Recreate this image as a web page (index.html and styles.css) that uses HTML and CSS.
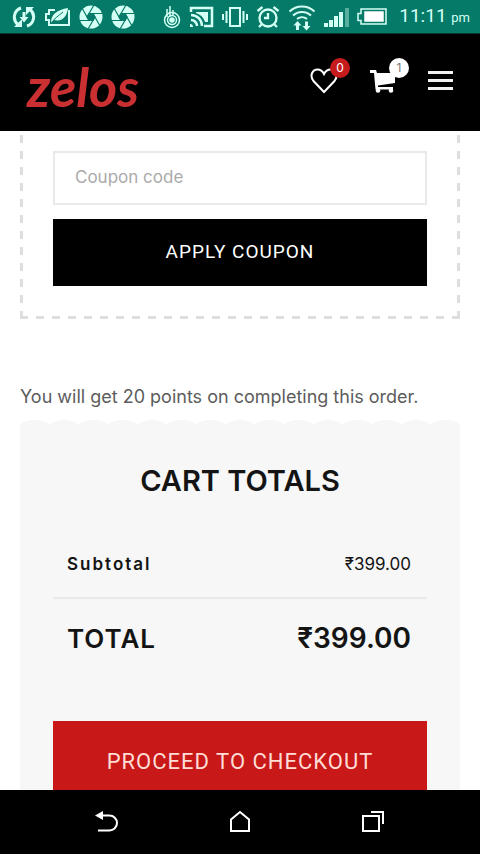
FILE: index.html
```html
<!DOCTYPE html>
<html lang="en">
<head>
<meta charset="utf-8">
<meta name="viewport" content="width=device-width, initial-scale=1">
<title>Cart – zelos</title>
<link rel="stylesheet" href="styles.css">
</head>
<body>
<div class="status-bar">
  <div class="status-icons status-left">
    <svg width="24" height="24" viewBox="0 0 24 24" fill="none" stroke="currentColor" stroke-width="3"><path d="M9 3A9.500 9.500 0 0 0 6 19.500M15 21A9.500 9.500 0 0 0 18 4.500M12 7v6"/><path d="M2 22h8v-8zM22 2h-8v8zM7.500 12h9L12 17.500z" fill="currentColor" stroke="none"/></svg>
    <svg width="27" height="24" viewBox="0 0 27 24" fill="none" stroke="currentColor" stroke-width="2"><path d="M11 5H5v4H2v6h3v5h20V5"/><path d="M7 18C7 9 13 5 24 3c-1 8-5 14-14 12z" fill="currentColor" stroke="none"/><path d="M6 19c4-5 8-8 13-12" stroke="#057a69" stroke-width="1"/></svg>
    <svg class="aperture" width="24" height="24" viewBox="0 0 24 24"><circle cx="12" cy="12" r="11.500" fill="currentColor"/><path d="M10 8.500h14M14 8.500L21 21M16 12l-7 12M14 15.500H0M10 15.500L3 3M8 12l7-12"/><path d="M16 12l-2 3.500h-4L8 12l2-3.500h4z" class="aperture-hole"/></svg>
    <svg class="aperture" width="24" height="24" viewBox="0 0 24 24"><circle cx="12" cy="12" r="11.500" fill="currentColor"/><path d="M10 8.500h14M14 8.500L21 21M16 12l-7 12M14 15.500H0M10 15.500L3 3M8 12l7-12"/><path d="M16 12l-2 3.500h-4L8 12l2-3.500h4z" class="aperture-hole"/></svg>
  </div>
  <div class="status-icons status-right">
    <svg width="18" height="24" viewBox="0 0 18 24" fill="none" stroke="currentColor" stroke-width="1.500"><circle cx="9" cy="15" r="7.500"/><circle cx="9" cy="15" r="4.500"/><circle cx="9" cy="15" r="2" fill="currentColor"/><path d="M4 12V4M7 12V1M10 10V5"/></svg>
    <svg width="25" height="24" viewBox="0 0 25 24" fill="none" stroke="currentColor" stroke-width="2.500"><path d="M2 7V3h21v18h-8M2 10a11 11 0 0 1 11 11M2 15a6 6 0 0 1 6 6"/><path d="M7 7h12v10h-3A14 14 0 0 0 7 8zM1 19a3 3 0 0 1 3 3H1z" fill="currentColor" stroke="none"/></svg>
    <svg width="26" height="24" viewBox="0 0 26 24" fill="none" stroke="currentColor" stroke-width="2"><path d="M8 3h10v18H8zM4.500 6v12M21.500 6v12M1 9v6M25 9v6"/></svg>
    <svg width="24" height="24" viewBox="0 0 24 24" fill="none" stroke="currentColor" stroke-width="2.300"><circle cx="12" cy="13" r="8.500"/><path d="M12 8v5h-4M1.500 6l5-4M22.500 6l-5-4M6 19l-3 3M18 19l3 3"/></svg>
    <svg width="28" height="28" viewBox="0 0 28 28" fill="none" stroke="currentColor" stroke-width="2"><path d="M1.500 8.500a18 18 0 0 1 25 0M5 12.500a13 13 0 0 1 18 0M9 16a8 8 0 0 1 10 0"/><path d="M9.500 18l4 4.500h-2.500V27H8v-4.500H5.500zM18.500 27.500l-4-4.500H17v-4.500h3V23h2.500z" fill="currentColor" stroke="none"/></svg>
    <svg width="25" height="22" viewBox="0 0 25 22" fill="currentColor"><path d="M0 17h4v4H0zM5 14h4v7H5zM10 10h4v11h-4zM15 6h4v15h-4z"/><path d="M21 2h4v19h-4z" opacity=".4"/></svg>
    <svg class="battery" width="30" height="18" viewBox="0 0 30 18" fill="none" stroke="currentColor" stroke-width="1.500"><path d="M4 1h25v15H4v-3.500H1v-7h3z"/><path d="M8 4h18v9H8z" fill="#fff" stroke="#fff"/></svg>
    <span class="clock">11:11 <small>pm</small></span>
  </div>
</div>

<header class="site-header">
  <a class="logo" href="#">zelos</a>
  <nav class="header-actions">
    <a class="action" href="#" aria-label="Wishlist">
      <svg width="28" height="26" viewBox="0 0 28 26" fill="none" stroke="#fff" stroke-width="2"><path d="M14 24L3.500 13C-1 7 3 1.500 7.500 1.500c3 0 5 1.500 6.500 4.500 1.500-3 3.500-4.500 6.500-4.500C25 1.500 29 7 24.500 13z"/></svg>
      <span class="badge badge-red">0</span>
    </a>
    <a class="action" href="#" aria-label="Cart">
      <svg width="28" height="26" viewBox="0 0 28 26" fill="#fff"><path d="M1 2h6l1 3h18v10L9 17.500V19h15v2.500H6.500L5 5H1z"/><circle cx="9" cy="22.500" r="2.300"/><circle cx="22" cy="22.500" r="2.300"/></svg>
      <span class="badge badge-white">1</span>
    </a>
    <button class="menu-button" type="button" aria-label="Menu"><svg width="25" height="20" viewBox="0 0 25 20" fill="#f2f2f2"><path d="M0 0h25v3H0zM0 8h25v3H0zM0 16h25v3H0z"/></svg></button>
  </nav>
</header>

<main class="content">
  <form class="coupon">
    <input class="coupon-input" type="text" placeholder="Coupon code" aria-label="Coupon code">
    <button class="button button-black" type="button">APPLY COUPON</button>
  </form>
  <p class="points">You will get 20 points on completing this order.</p>
  <section class="totals">
    <h2 class="totals-title">CART TOTALS</h2>
    <table class="totals-table">
      <tr class="row-subtotal"><th scope="row">Subtotal</th><td>₹399.00</td></tr>
      <tr class="row-total"><th scope="row">TOTAL</th><td>₹399.00</td></tr>
    </table>
    <button class="button button-red" type="button">PROCEED TO CHECKOUT</button>
  </section>
</main>

<nav class="system-nav">
  <button type="button" aria-label="Back"><svg width="24" height="24" viewBox="0 0 24 24" fill="none" stroke="#fff" stroke-width="2"><path d="M5 5.500h9.500a7.500 7.500 0 0 1 0 15H3"/><path d="M0 5.500L8 1v9z" fill="#fff" stroke="none"/></svg></button>
  <button type="button" aria-label="Home"><svg width="24" height="24" viewBox="0 0 24 24" fill="none" stroke="#fff" stroke-width="2"><path d="M3 9.500L12 2l9 7.500V21H3z"/></svg></button>
  <button type="button" aria-label="Recent apps"><svg width="24" height="24" viewBox="0 0 24 24" fill="none" stroke="#fff" stroke-width="2"><path d="M2 6h16v15H2zM10 2h12v12"/></svg></button>
</nav>
</body>
</html>
```
FILE: styles.css
```css
* {
  box-sizing: border-box;
}

body {
  margin: 0;
  height: 100vh;
  display: flex;
  flex-direction: column;
  background: #fff;
  color: #141414;
  font-family: Inter, "Liberation Sans", sans-serif;
}

button {
  border: 0;
  padding: 0;
  font-family: inherit;
  cursor: pointer;
}

svg {
  display: block;
}

.status-bar {
  flex: none;
  display: flex;
  justify-content: space-between;
  align-items: center;
  height: 34px;
  padding: 0 10px 0 12px;
  background: #057a69;
  color: #d3fff4;
  border-bottom: 1px solid #073c36;
}

.status-icons {
  display: flex;
  align-items: center;
  gap: 8px;
}

.aperture path {
  fill: none;
  stroke: #057a69;
  stroke-width: 1.2;
}

.aperture .aperture-hole {
  fill: #057a69;
}

.clock {
  margin-left: 4px;
  font-family: Roboto, sans-serif;
  font-size: 19px;
  line-height: 24px;
  white-space: nowrap;
}

.clock small {
  font-size: 13px;
}

.site-header {
  flex: none;
  display: flex;
  justify-content: space-between;
  align-items: center;
  height: 97px;
  padding: 0 27px 4px;
  background: #000;
}

.logo {
  padding-top: 12px;
  color: #ca3032;
  font-family: Lato, sans-serif;
  font-size: 54px;
  font-style: italic;
  font-weight: 700;
  line-height: 60px;
  text-decoration: none;
}

.header-actions {
  display: flex;
  align-items: center;
  gap: 31px;
}

.action {
  position: relative;
  color: #fff;
}

.badge {
  position: absolute;
  top: -10px;
  left: 20px;
  width: 20px;
  height: 20px;
  border-radius: 50%;
  font-size: 12px;
  line-height: 20px;
  text-align: center;
}

.badge-red {
  background: #c51b1d;
  color: #fff;
}

.badge-white {
  background: #fff;
  color: #777;
}

.menu-button {
  background: none;
}

.content {
  flex: 1;
  min-height: 0;
  overflow-y: auto;
  scrollbar-width: none;
  padding: 0 20px;
}

.coupon {
  --dash: #dedede 0 8px, transparent 8px 16px;
  display: flex;
  flex-direction: column;
  gap: 14px;
  padding: 20px 33px 33px;
  background:
    repeating-linear-gradient(to top, var(--dash)) left / 3px 100% no-repeat,
    repeating-linear-gradient(to top, var(--dash)) right / 3px 100% no-repeat,
    repeating-linear-gradient(to right, var(--dash)) bottom / 100% 3px no-repeat;
}

.coupon-input {
  width: 100%;
  height: 54px;
  padding: 0 20px 2px;
  border: 2px solid #e9e9e9;
  border-radius: 0;
  background: #fff;
  font-family: inherit;
  font-size: 17px;
}

.coupon-input::placeholder {
  color: #aaa;
  opacity: 1;
}

.button {
  display: block;
  width: 100%;
  color: #fff;
  font-family: Roboto, sans-serif;
  letter-spacing: 1px;
}

.button-black {
  height: 67px;
  padding-bottom: 2px;
  background: #000;
  font-size: 19px;
}

.button-red {
  height: 80px;
  background: #c81818;
  color: #ffdcd6;
  font-size: 22px;
}

.points {
  margin: 65px 0 11px;
  color: #5c5c5c;
  font-size: 18px;
  line-height: 25px;
}

.totals {
  padding: 43px 33px 33px;
  background:
    radial-gradient(ellipse 15px 6px at 50% 100%, #f7f7f7 96%, transparent) top / 29px 6px round no-repeat,
    linear-gradient(#f7f7f7, #f7f7f7) 0 6px no-repeat;
}

.totals-title {
  margin: 0 0 32px;
  font-size: 29px;
  font-weight: 600;
  line-height: 36px;
  text-align: center;
}

.totals-table {
  width: 100%;
  border-collapse: collapse;
}

.totals-table th,
.totals-table td {
  padding: 0 16px 0 14px;
}

.totals-table th {
  font-weight: 600;
  text-align: left;
}

.totals-table td {
  text-align: right;
}

.row-subtotal {
  height: 67px;
  border-bottom: 2px solid #e9e9e9;
  font-size: 17px;
}

.row-subtotal th {
  letter-spacing: 2px;
}

.row-total {
  height: 79px;
  font-size: 28px;
  font-weight: 600;
}

.row-total th {
  font-size: 26px;
  letter-spacing: 1px;
}

.totals .button {
  margin-top: 44px;
}

.system-nav {
  flex: none;
  display: flex;
  justify-content: center;
  align-items: center;
  gap: 109px;
  height: 64px;
  background: #000;
}

.system-nav button {
  background: none;
}
```
